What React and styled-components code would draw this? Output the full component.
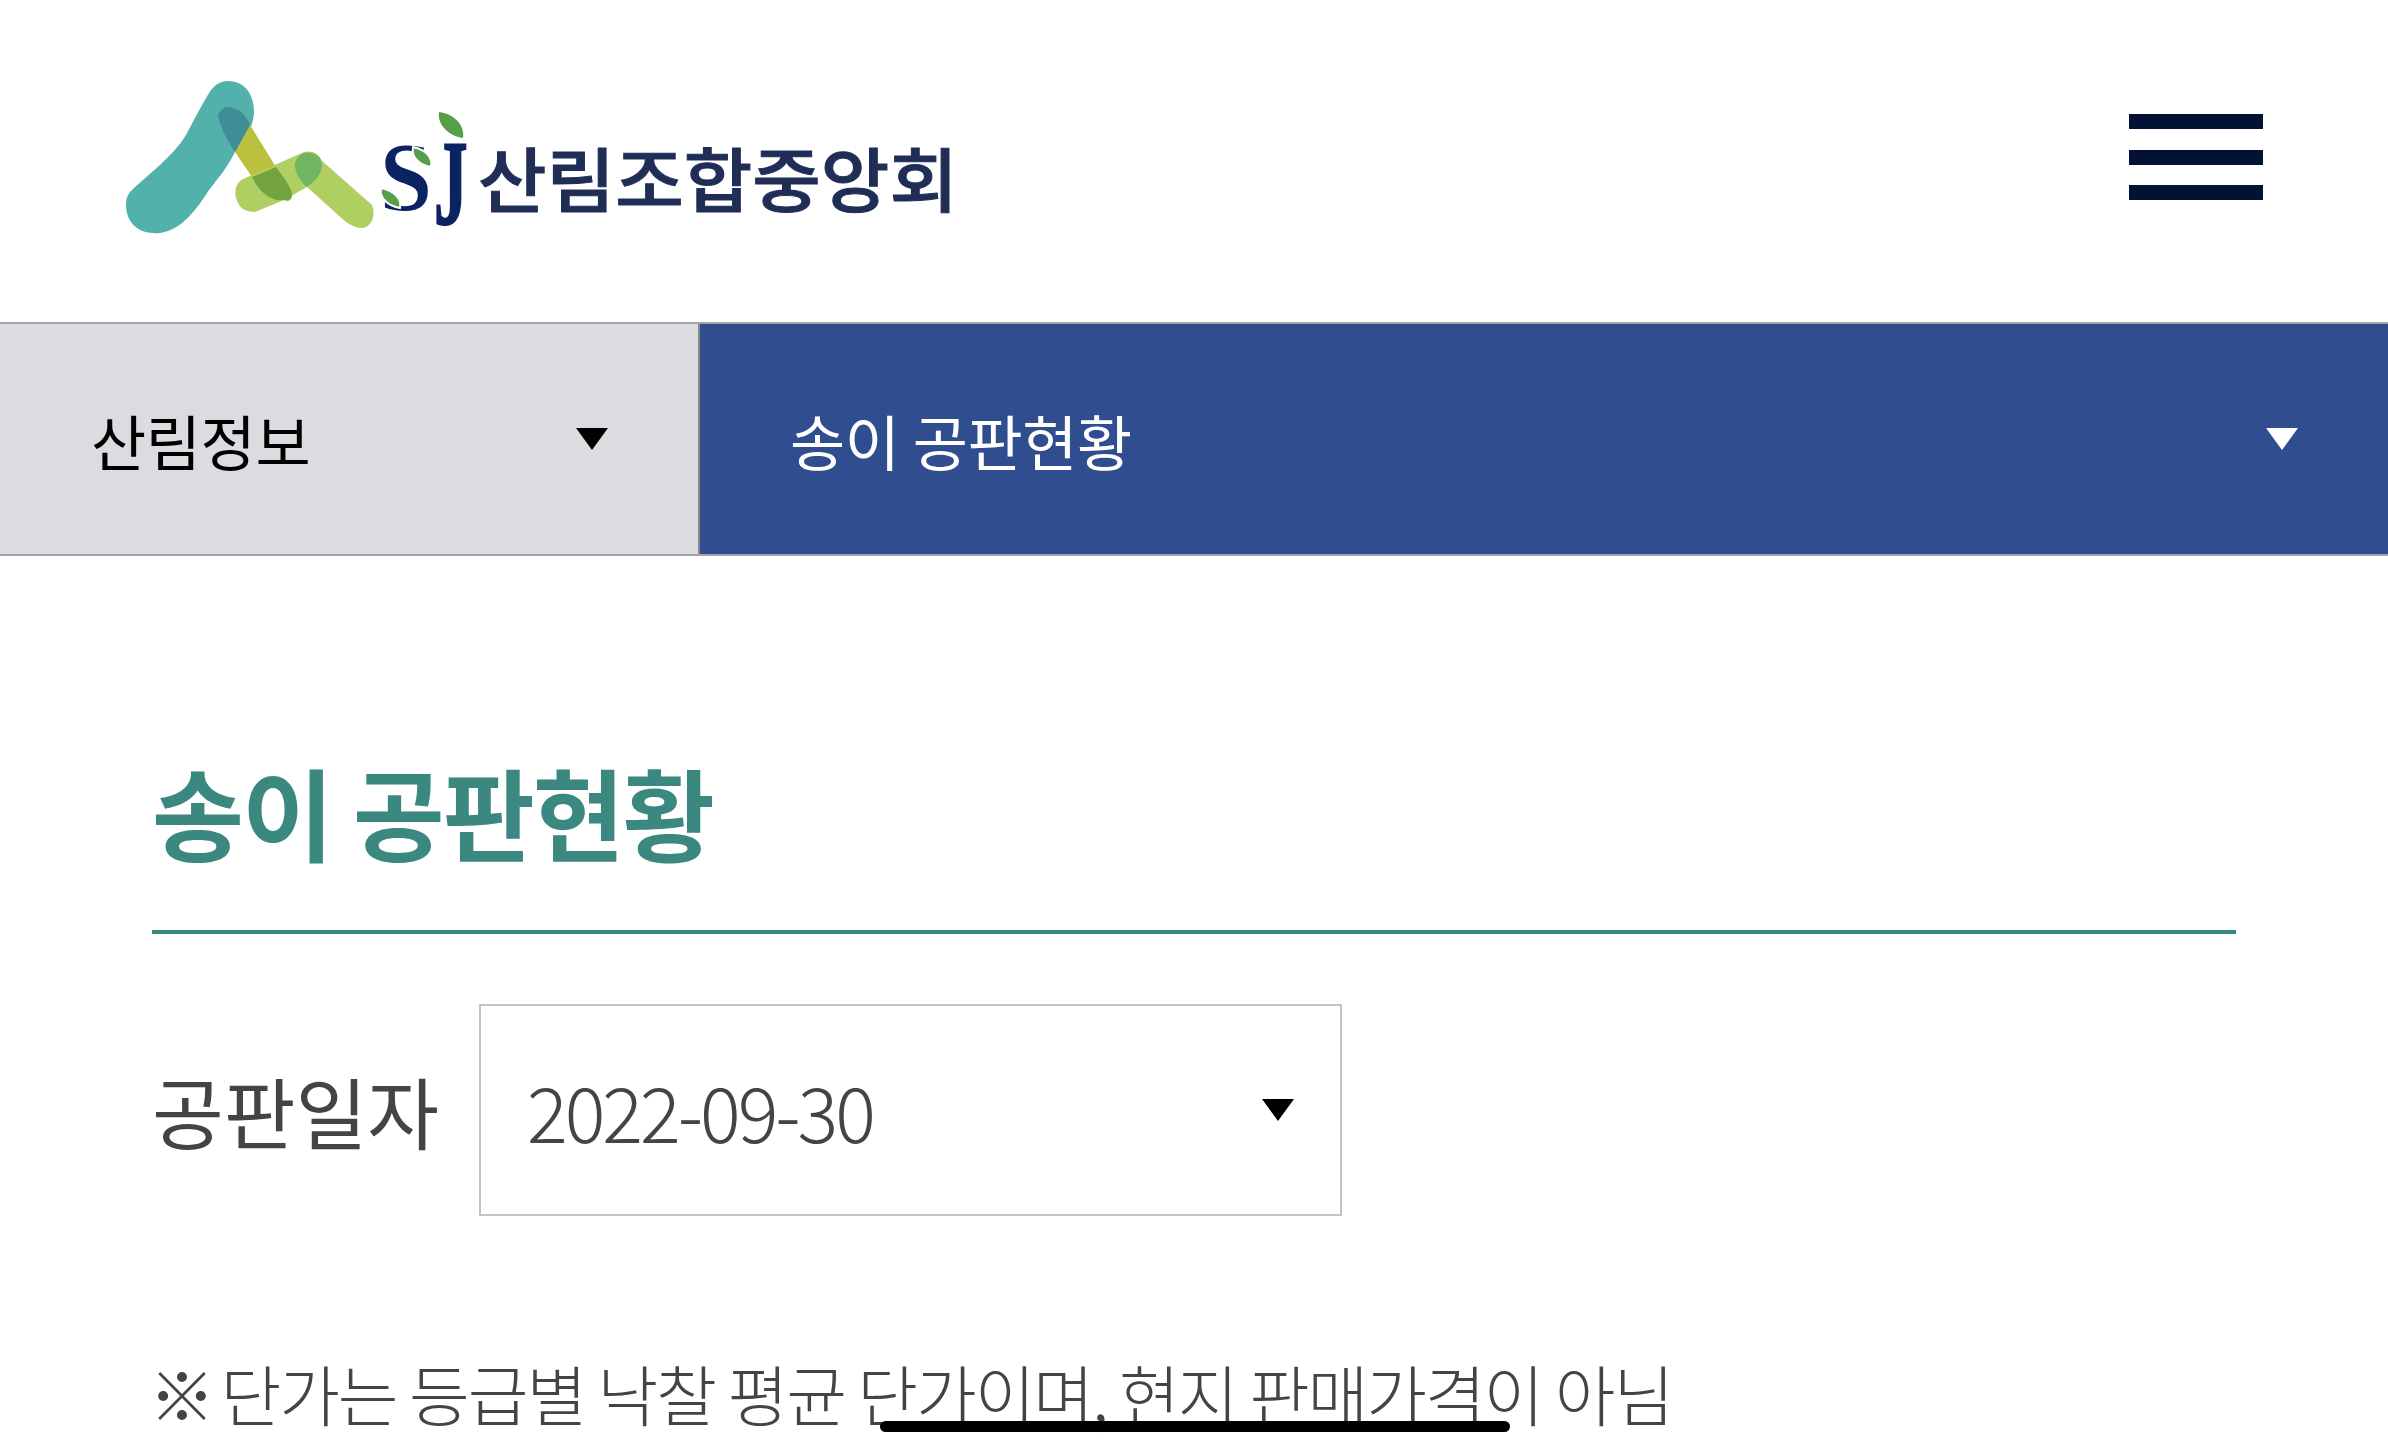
import React from 'react';
import styled, { createGlobalStyle } from 'styled-components';

const GlobalStyle = createGlobalStyle`
  html, body {
    margin: 0;
    padding: 0;
    background: #fff;
    overflow: hidden;
  }
  body {
    font-family: "Noto Sans CJK KR", "Noto Sans", sans-serif;
  }
`;

const Page = styled.div`
  position: relative;
  width: 2388px;
  height: 1447px;
  overflow: hidden;
  background: #fff;
`;

const Header = styled.header`
  height: 322px;
  box-sizing: border-box;
  padding: 0 125px 8px 120px;
  display: flex;
  align-items: center;
  justify-content: space-between;
`;

const Burger = styled.div`
  width: 134px;
  height: 86px;
  display: flex;
  flex-direction: column;
  justify-content: space-between;
`;

const BurgerBar = styled.span`
  display: block;
  height: 15px;
  background: #031234;
`;

const Nav = styled.nav`
  display: flex;
  height: 234px;
  box-sizing: border-box;
  border-top: 2px solid #a5a5a5;
  border-bottom: 2px solid #a5a5a5;
`;

const NavCell = styled.div`
  display: flex;
  align-items: center;
  justify-content: space-between;
  box-sizing: border-box;
  background: ${(p) => (p.$active ? '#304e8f' : '#dbdce0')};
  color: ${(p) => (p.$active ? '#fff' : '#000')};
  width: ${(p) => (p.$active ? 'auto' : '700px')};
  flex: ${(p) => (p.$active ? '1' : '0 0 auto')};
  border-right: ${(p) => (p.$active ? '0' : '2px solid #8a8a8c')};
  padding: ${(p) => (p.$active ? '0 90px' : '0 90px 0 91px')};
  font-size: 60px;
  font-weight: 400;
  letter-spacing: -0.4px;
`;

const Caret = styled.span`
  display: block;
  width: 0;
  height: 0;
  border-left: 16px solid transparent;
  border-right: 16px solid transparent;
  border-top: 22px solid ${(p) => p.$color};
`;

const Content = styled.main`
  padding: 0 152px;
`;

const Title = styled.h2`
  margin: 0;
  height: 378px;
  box-sizing: border-box;
  padding-top: 190px;
  border-bottom: 4px solid #3b8880;
  color: #3b8880;
  font-size: 100px;
  line-height: 130px;
  font-weight: 700;
  letter-spacing: -2px;
`;

const DateRow = styled.div`
  display: flex;
  align-items: center;
  gap: 40px;
  margin-top: 70px;
`;

const Label = styled.span`
  color: #444;
  font-size: 78px;
  font-weight: 400;
  letter-spacing: 0;
`;

const DateSelect = styled.div`
  width: 863px;
  height: 212px;
  box-sizing: border-box;
  border: 2px solid #c4c4c4;
  padding: 0 46px;
  display: flex;
  align-items: center;
  justify-content: space-between;
  color: #444;
  font-size: 76px;
  font-weight: 300;
  letter-spacing: -3px;
`;

const Note = styled.p`
  margin: 131px 0 0;
  color: #444;
  font-size: 66px;
  line-height: 90px;
  font-weight: 300;
  white-space: nowrap;
  letter-spacing: -2.05px;
`;

const NoteMark = styled.span`
  margin: 0 -5px 0 -3px;
`;

const HomeIndicator = styled.div`
  position: absolute;
  left: 880px;
  top: 1421px;
  width: 630px;
  height: 11px;
  border-radius: 6px;
  background: #000;
`;

const Logo = () => (
  <svg width="840" height="205" viewBox="120 55 840 205" role="img" aria-label="SJ 산림조합중앙회">
    {/* teal stroke */}
    <path
      fill="#53b1ac"
      d="M228 81C243 81 254 92 254 112C254 125 246 138 235 152C226 170 218 178 209 190C200 204 190 218 178 226C168 232 160 234 153 233C138 233 126 222 126 205C126 198 128 193 134 188C145 178 152 172 160 165C170 155 178 148 186 135C194 120 200 108 209 93C214 85 220 81 228 81Z"
    />
    {/* yellow stroke */}
    <path fill="#bbc03f" d="M250 125L276 167L252 177L235 152Z" />
    <path fill="#3f8e96" d="M229 107C238 108 246 114 250 125L235 152C228 142 222 130 218 117C218 112 223 107 229 107Z" />
    {/* light green strokes */}
    <path
      fill="#b0cf63"
      d="M241 180L304 152C312 150 318 153 321 160L372 205C376 215 372 227 362 228C354 228 345 222 338 215L307 187L284 200L255 212C246 212 240 208 238 203C234 195 234 186 241 180Z"
    />
    <path fill="#72a33c" d="M252 177L276 167C284 178 292 188 292 195C292 200 288 202 284 200C270 202 258 190 252 177Z" />
    <path fill="#6fb562" d="M295 163C298 155 304 152 310 153C316 154 320 156 321 160C325 170 316 181 307 187C301 182 294 172 295 163Z" />
    <text
      transform="translate(380 210) scale(0.95 1)"
      fontFamily="Liberation Serif, serif"
      fontWeight="700"
      fontSize="98"
      fill="#0b2362"
    >
      S
    </text>
    <text
      transform="translate(434 224) scale(0.56 1)"
      fontFamily="Liberation Serif, serif"
      fontWeight="700"
      fontSize="120"
      fill="#0b2362"
      stroke="#0b2362"
      strokeWidth="2"
    >
      J
    </text>
    {/* leaves */}
    <path fill="#56a04a" d="M439 112C455 114 465 126 463 138C448 136 437 124 439 112Z" />
    <path fill="#56a04a" stroke="#fff" strokeWidth="2" d="M413 147C427 150 433 158 431 167C419 165 411 157 413 147Z" />
    <path fill="#56a04a" stroke="#fff" strokeWidth="2" d="M381 188C395 191 402 199 400 208C388 206 379 198 381 188Z" />
    <text
      x="478"
      y="207"
      fontFamily="Noto Sans CJK KR, sans-serif"
      fontWeight="500"
      fontSize="70"
      fill="#1f2d57"
      stroke="#1f2d57"
      strokeWidth="1"
      textLength="480"
      lengthAdjust="spacingAndGlyphs"
    >
      산림조합중앙회
    </text>
  </svg>
);

export default function App() {
  return (
    <Page>
      <GlobalStyle />
      <Header>
        <Logo />
        <Burger>
          <BurgerBar />
          <BurgerBar />
          <BurgerBar />
        </Burger>
      </Header>
      <Nav>
        <NavCell>
          산림정보
          <Caret $color="#000" />
        </NavCell>
        <NavCell $active>
          송이 공판현황
          <Caret $color="#fff" />
        </NavCell>
      </Nav>
      <Content>
        <Title>송이 공판현황</Title>
        <DateRow>
          <Label>공판일자</Label>
          <DateSelect>
            2022-09-30
            <Caret $color="#000" />
          </DateSelect>
        </DateRow>
        <Note>
          <NoteMark>※</NoteMark> 단가는 등급별 낙찰 평균 단가이며, 현지 판매가격이 아님
        </Note>
      </Content>
      <HomeIndicator />
    </Page>
  );
}
